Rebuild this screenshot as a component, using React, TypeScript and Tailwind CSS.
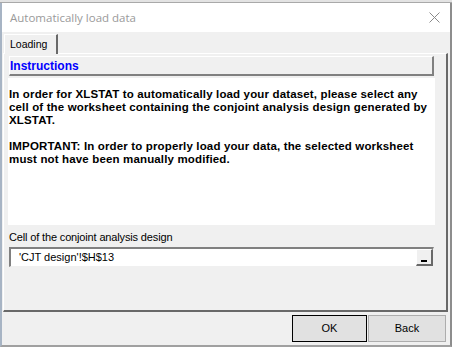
import React from 'react';

const tahoma = { fontFamily: '"Liberation Sans", Arial, sans-serif' };

export default function App() {
  return (
    <div className="w-[452px] h-[347px] bg-[#d9d9d9] flex flex-col overflow-hidden">
      {/* strip of the window behind */}
      <div className="h-[3px] bg-[#e3e3e3] border-b border-[#a9a9a9]" />

      {/* Dialog window */}
      <div className="flex-1 flex flex-col border-l-2 border-r-2 border-b-2 border-l-[#a7b4c4] border-r-[#8d8d8d] border-b-[#a0a0a0] bg-[#f0f0f0]">
        {/* Title bar */}
        <div className="h-[29px] bg-white flex items-center justify-between pl-[8px] pr-[9px]">
          <span className="text-[11.5px] text-[#9a9a9a] font-['Open_Sans',sans-serif] leading-none">
            Automatically load data
          </span>
          <svg width="11" height="11" viewBox="0 0 11 11" className="mr-[1px]">
            <path d="M0.5 0.5 L10.5 10.5 M10.5 0.5 L0.5 10.5" stroke="#8a8a8a" strokeWidth="1" />
          </svg>
        </div>

        {/* Client area */}
        <div className="flex-1 flex flex-col" style={tahoma}>
          {/* Tab strip */}
          <div className="h-[21px] flex items-end pl-[2px] pt-[1px]">
            <div className="h-[20px] w-[54px] bg-[#f0f0f0] border-t border-l border-white border-r-2 border-r-[#696969] flex items-center pl-[5px] text-[10.5px] text-black relative top-[1px]">
              Loading
            </div>
          </div>

          {/* Tab page */}
          <div className="ml-[1px] mr-[2px] h-[259px] border-t border-l border-white border-r-2 border-b-2 border-r-[#696969] border-b-[#696969] flex flex-col pl-[4px] pr-[11px] pt-[2px]">
            {/* Instructions header */}
            <div className="h-[20px] mx-[1px] border-t border-l border-white border-r-2 border-b-2 border-r-[#808080] border-b-[#808080] flex items-center text-[12px] font-bold text-[#0000ff]">
              Instructions
            </div>

            {/* Instructions text */}
            <div className="mt-[2px] h-[147px] bg-white pl-[1px] pt-[9.5px] text-[11.5px] font-bold text-black leading-[13px] tracking-[0.15px]">
              <p>
                In order for XLSTAT to automatically load your dataset, please select any cell of the worksheet containing the conjoint analysis design generated by XLSTAT.
              </p>
              <p className="mt-[13px]">
                IMPORTANT: In order to properly load your data, the selected worksheet must not have been manually modified.
              </p>
            </div>

            {/* Cell label */}
            <div className="mt-[6px] pl-[1px] text-[11px] text-black leading-[13px] tracking-[-0.15px]">
              Cell of the conjoint analysis design
            </div>

            {/* Range input */}
            <div className="mt-[3px] mx-[1px] h-[20px] bg-white border-t-2 border-l-2 border-t-[#808080] border-l-[#808080] border-b border-r border-b-[#f0f0f0] border-r-[#f0f0f0] flex items-center justify-between">
              <span className="pl-[8px] text-[11px] text-black">'CJT design'!$H$13</span>
              <div className="w-[17px] h-[17px] mb-[1px] bg-[#f0f0f0] border-t border-l border-white border-r-2 border-b-2 border-r-[#696969] border-b-[#696969] flex items-end justify-center pb-[2px]">
                <div className="w-[6px] h-[2px] bg-black" />
              </div>
            </div>
          </div>

          {/* Buttons */}
          <div className="flex justify-end gap-[1px] pt-[3px] pr-[4px]">
            <button className="w-[75px] h-[27px] border border-black bg-[#e1e1e1] text-[11px] text-black">
              OK
            </button>
            <button className="w-[78px] h-[27px] border border-[#adadad] bg-[#e1e1e1] text-[11px] text-black">
              Back
            </button>
          </div>
        </div>
      </div>
    </div>
  );
}
